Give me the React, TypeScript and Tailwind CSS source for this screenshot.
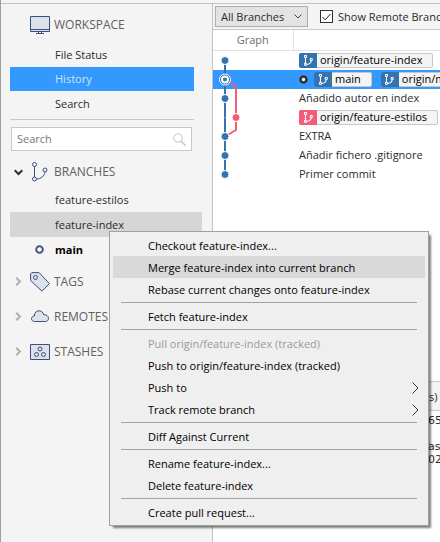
import { Fragment, ReactNode } from "react";

const ICON = "#3c4f7c";
const FILL = "#dde2ea";

function BranchGlyph({ className }: { className: string }) {
  return (
    <svg viewBox="0 0 16 20" className={className} fill="none" stroke="currentColor" aria-hidden="true">
      <circle cx="2.5" cy="2.5" r="2" />
      <circle cx="2.5" cy="17" r="2" />
      <circle cx="13" cy="8" r="2" />
      <path d="M2.5 4.5V15M4.5 17C9 17 12.5 14 13 10" />
    </svg>
  );
}

function MonitorIcon() {
  return (
    <svg width="20" height="18" viewBox="0 0 20 18" fill="none" stroke={ICON} aria-hidden="true">
      <path d="M.5.5h19v15H.5z" fill={FILL} />
      <path d="M.5 13.5h19M8.500 15.500v2M11.500 15.500v2M6 17.500h8" />
    </svg>
  );
}

function TagIcon() {
  return (
    <svg width="20" height="20" viewBox="0 0 20 20" fill={FILL} stroke={ICON} aria-hidden="true">
      <path d="M.6 1.800 1.800.6 9 .6l10.400 11L12 19.200.6 8.500z" />
      <circle cx="5.500" cy="5.500" r="2" />
    </svg>
  );
}

function CloudIcon() {
  return (
    <svg width="20" height="13" viewBox="0 0 20 13" fill={FILL} stroke={ICON} aria-hidden="true">
      <path d="M4.500 11.500C2.500 11.500 1.500 10 1.500 8.800 1.500 7 2.800 6 4.300 6 4.300 2.800 6.500.8 9 .8c2.600 0 4 1.600 4.600 3.900 2.400-.3 4.900 1 4.900 3.700 0 2-1.500 3.100-3 3.100z" />
    </svg>
  );
}

function StashIcon() {
  return (
    <svg width="20" height="16" viewBox="0 0 20 16" fill={FILL} stroke={ICON} aria-hidden="true">
      <path d="M.5.5h19v15H.5z" />
      <circle cx="10" cy="5" r="2" />
      <circle cx="6.500" cy="10.500" r="2" />
      <circle cx="13.500" cy="10.500" r="2" />
    </svg>
  );
}

function Section({ title, icon, state }: { title: string; icon: ReactNode; state?: "open" | "closed" }) {
  return (
    <button type="button" className="flex h-full w-full items-center text-left text-[12px] font-medium text-[#606060]">
      <span className="flex w-[29px] shrink-0 items-center pl-[13px]">
        {state === "open" && (
          <svg width="9" height="7" viewBox="0 0 9 7" fill="none" stroke="#333" strokeWidth="2" aria-hidden="true">
            <path d="M.7 1.200 4.500 5 8.300 1.200" />
          </svg>
        )}
        {state === "closed" && (
          <svg width="7" height="9" viewBox="0 0 7 9" fill="none" stroke="#b0b0b0" strokeWidth="2" className="ml-px" aria-hidden="true">
            <path d="M1.200.7 5 4.500 1.200 8.300" />
          </svg>
        )}
      </span>
      <span className="flex w-[24px] shrink-0 items-center">{icon}</span>
      {title}
    </button>
  );
}

function Ref({ name, pink }: { name: string; pink?: boolean }) {
  return (
    <span className="inline-flex h-[15px] items-center rounded-[2px] border border-[#c8c8c8] bg-[#f4f4f4] pr-[10px] text-black">
      <span
        className={`mr-[3px] -ml-px flex h-[15px] w-[18px] items-center justify-center rounded-l-[2px] text-white ${
          pink ? "bg-[#f25c78]" : "bg-[#3572b0]"
        }`}
      >
        <BranchGlyph className="h-[11px] w-[9px] stroke-2" />
      </span>
      {name}
    </span>
  );
}

const BLUE = "#3572b0";
const PINK = "#f25c78";

function GraphCell({ up, down, pink, dot = "blue" }: { up?: boolean; down?: boolean; pink?: string; dot?: "blue" | "ring" | "pink" }) {
  return (
    <svg width="40" height="19" viewBox="0 0 40 19" fill="none" strokeWidth="2" className="block" aria-hidden="true">
      {up && <path d="M12 0V9.500" stroke={BLUE} />}
      {down && <path d="M12 9.500V19" stroke={BLUE} />}
      {pink && <path d={pink} stroke={PINK} />}
      {dot === "blue" && <circle cx="12" cy="9.500" r="4" fill={BLUE} stroke="white" strokeWidth="1" />}
      {dot === "pink" && <circle cx="23" cy="9.500" r="4" fill={PINK} stroke="white" strokeWidth="1" />}
      {dot === "ring" && (
        <>
          <circle cx="12" cy="9.500" r="5.500" fill={BLUE} stroke="white" strokeWidth="1" />
          <circle cx="12" cy="9.500" r="3" fill={BLUE} stroke="white" strokeWidth="2" />
        </>
      )}
    </svg>
  );
}

const commits: { graph: ReactNode; text: ReactNode; selected?: boolean }[] = [
  { graph: <GraphCell down />, text: <Ref name="origin/feature-index" /> },
  {
    graph: <GraphCell up down dot="ring" pink="M12 9.500 23 17V19" />,
    selected: true,
    text: (
      <span className="flex items-center">
        <svg width="9" height="9" viewBox="0 0 9 9" className="mr-[6px]" aria-hidden="true">
          <circle cx="4.500" cy="4.500" r="3" fill="white" stroke="#333" strokeWidth="2.500" />
        </svg>
        <span className="mr-[9px] flex">
          <Ref name="main" />
        </span>
        <Ref name="origin/main" />
      </span>
    ),
  },
  { graph: <GraphCell up down pink="M23 0V19" />, text: "Añadido autor en index" },
  { graph: <GraphCell up down dot="pink" pink="M23 0V19" />, text: <Ref name="origin/feature-estilos" pink /> },
  { graph: <GraphCell up down pink="M23 0V3L12 9.500" />, text: "EXTRA" },
  { graph: <GraphCell up down />, text: "Añadir fichero .gitignore" },
  { graph: <GraphCell up />, text: "Primer commit" },
];

type Item = { label: string; active?: boolean; disabled?: boolean; sub?: boolean };

const menu: Item[][] = [
  [
    { label: "Checkout feature-index..." },
    { label: "Merge feature-index into current branch", active: true },
    { label: "Rebase current changes onto feature-index" },
  ],
  [{ label: "Fetch feature-index" }],
  [
    { label: "Pull origin/feature-index (tracked)", disabled: true },
    { label: "Push to origin/feature-index (tracked)" },
    { label: "Push to", sub: true },
    { label: "Track remote branch", sub: true },
  ],
  [{ label: "Diff Against Current" }],
  [{ label: "Rename feature-index..." }, { label: "Delete feature-index" }],
  [{ label: "Create pull request..." }],
];

function ContextMenu() {
  return (
    <div
      role="menu"
      className="absolute top-[227px] left-[108px] w-[320px] border border-[#a0a0a0] bg-[#efefef] px-[3px] py-[2px] text-black shadow-[3px_3px_2px_-1px_rgba(0,0,0,0.5)]"
    >
      {menu.map((group, i) => (
        <Fragment key={i}>
          {i > 0 && <hr className="mx-2 my-[2px] border-[#a0a0a0]" />}
          {group.map((item) => (
            <button
              key={item.label}
              type="button"
              role="menuitem"
              disabled={item.disabled}
              className={`flex h-[22px] w-full items-center justify-between pt-px pr-[6px] pl-[35px] text-left whitespace-nowrap disabled:text-[#9b9b9b] ${
                item.active ? "bg-[#d9d9d9]" : ""
              }`}
            >
              {item.label}
              {item.sub && (
                <svg width="7" height="12" viewBox="0 0 7 12" fill="none" stroke="#333" aria-hidden="true">
                  <path d="M.5.5 6 6 .5 11.500" />
                </svg>
              )}
            </button>
          ))}
        </Fragment>
      ))}
    </div>
  );
}

function Sidebar() {
  const item = "flex h-[25px] w-full items-center pl-[45px] text-left";
  return (
    <nav className="w-[212px] shrink-0 border-r border-[#c3c3c3] pt-[3px] pr-[10px] pl-[9px]">
      <div className="-ml-[9px] h-[35px]">
        <Section title="WORKSPACE" icon={<MonitorIcon />} />
      </div>
      <div className="mr-2">
        <button type="button" className={item}>File Status</button>
        <button type="button" className="flex h-[24px] w-full items-center bg-[#3399ff] pl-[45px] text-left text-[#d3e2f2]">
          History
        </button>
        <button type="button" className={item}>Search</button>
        <hr className="mt-[3px] mb-[7px] border-[#c8c8c8]" />
        <label className="mr-[2px] ml-px flex h-[24px] items-center border border-[#c8c8c8] bg-white pr-[5px] pl-[5px]">
          <input type="text" placeholder="Search" aria-label="Search branches" className="min-w-0 flex-1 outline-none placeholder:text-[#777]" />
          <svg width="13" height="13" viewBox="0 0 13 13" fill="none" stroke="#c3c3c3" aria-hidden="true">
            <circle cx="5" cy="5" r="4.200" />
            <path d="m8 8 4.500 4.500" strokeWidth="1.500" />
          </svg>
        </label>
      </div>
      <div className="mt-[6px] -ml-[9px] h-[30px]">
        <Section
          title="BRANCHES"
          state="open"
          icon={
            <span className="ml-[2px] flex text-[#3c4f7c]">
              <BranchGlyph className="h-[20px] w-[16px]" />
            </span>
          }
        />
      </div>
      <button type="button" className={item}>feature-estilos</button>
      <button type="button" className={`${item} bg-[#d6d6d6]`}>feature-index</button>
      <button type="button" className="flex h-[25px] w-full items-center pl-[25px] text-left font-bold text-black">
        <svg width="9" height="9" viewBox="0 0 9 9" className="mr-[11px]" aria-hidden="true">
          <circle cx="4.500" cy="4.500" r="3.300" fill="white" stroke="#45557a" strokeWidth="2" />
        </svg>
        main
      </button>
      <div className="-ml-[9px] grid auto-rows-[35px] pt-[2px]">
        <Section title="TAGS" state="closed" icon={<TagIcon />} />
        <Section title="REMOTES" state="closed" icon={<CloudIcon />} />
        <Section title="STASHES" state="closed" icon={<StashIcon />} />
      </div>
    </nav>
  );
}

export default function App() {
  return (
    <div className="flex min-h-screen flex-col overflow-hidden border-l border-[#a0a0a0] bg-[#f4f4f4] pt-[3px] font-['Open_Sans','Noto_Sans',sans-serif] text-[11px] leading-[16px] text-[#2b2b2b]">
      <div className="relative flex flex-1 border-t border-[#c3c3c3]">
        <Sidebar />
        <main className="flex min-w-0 flex-1 flex-col overflow-hidden bg-white whitespace-nowrap">
          <div className="flex h-[26px] shrink-0 items-center border-b border-[#c8c8c8] bg-[#f4f4f4] pl-[2px]">
            <div className="grid shrink-0 items-center">
              <select
                aria-label="Branch filter"
                className="col-start-1 row-start-1 h-[21px] w-[93px] appearance-none border border-[#adadad] bg-[#e3e3e3] pl-[5px]"
              >
                <option>All Branches</option>
              </select>
              <svg width="8" height="5" viewBox="0 0 8 5" fill="none" stroke="#444" className="pointer-events-none col-start-1 row-start-1 mr-[6px] justify-self-end" aria-hidden="true">
                <path d="M.5.5 4 4 7.500.5" />
              </svg>
            </div>
            <label className="ml-3 flex items-center">
              <span className="mr-[5px] grid items-center justify-items-center">
                <input type="checkbox" defaultChecked className="peer col-start-1 row-start-1 size-[13px] appearance-none border border-[#333] bg-white" />
                <svg width="9" height="8" viewBox="0 0 9 8" fill="none" stroke="#222" className="pointer-events-none invisible col-start-1 row-start-1 peer-checked:visible" aria-hidden="true">
                  <path d="M.5 4 3.200 6.800 8.500 1" />
                </svg>
              </span>
              Show Remote Branches
            </label>
          </div>
          <table className="w-full table-fixed border-collapse">
            <thead>
              <tr className="h-[20px] border-b border-[#e3e3e3] text-[#6e6e6e]">
                <th className="w-[80px] border-r border-[#e3e3e3] p-0 font-normal">Graph</th>
                <th className="p-0" aria-label="Description" />
              </tr>
            </thead>
            <tbody>
              {commits.map((c, i) => (
                <tr key={i} className={c.selected ? "h-[19px] bg-[#3399ff]" : "h-[19px]"}>
                  <td className="p-0">{c.graph}</td>
                  <td className="p-0 pl-[6px]">
                    <div className="flex h-[19px] items-center">{c.text}</div>
                  </td>
                </tr>
              ))}
            </tbody>
          </table>
          <section className="mt-auto h-[161px] shrink-0 font-['DejaVu_Sans',sans-serif] leading-[13px]">
            <h2 className="flex h-[30px] items-center border-y border-[#c8c8c8] bg-[#f4f4f4] pl-[216px] font-['Open_Sans',sans-serif]">
              s)
            </h2>
            <div className="pt-[3px] pl-[215px]">
              <p>65</p>
              <p className="mt-[13px]">ast</p>
              <p>024</p>
            </div>
          </section>
        </main>
        <ContextMenu />
      </div>
    </div>
  );
}
